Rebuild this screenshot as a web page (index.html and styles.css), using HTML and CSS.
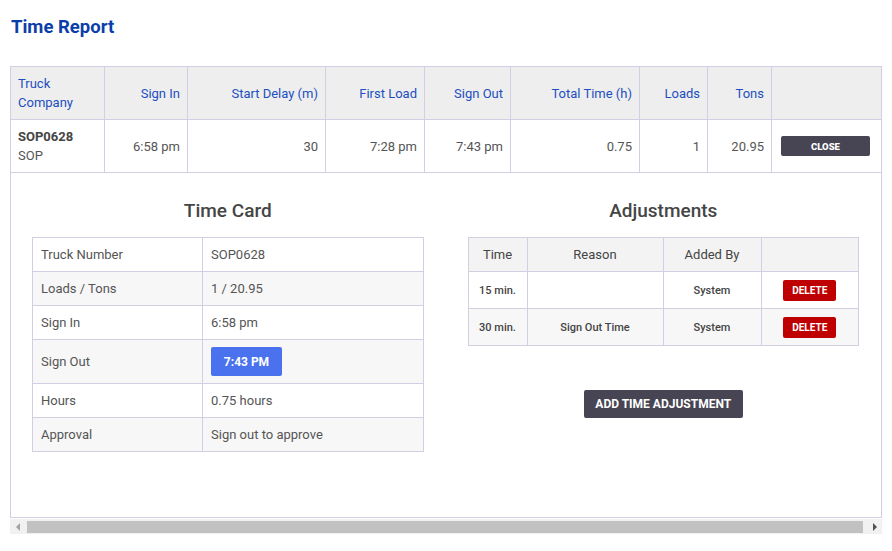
FILE: index.html
```html
<!DOCTYPE html>
<html lang="en">
<head>
  <meta charset="UTF-8">
  <title>Time Report</title>
  <link rel="stylesheet" href="styles.css">
</head>
<body>
  <div class="page">
    <h1 class="page-title">Time Report</h1>

    <div class="report-scroll">
      <table class="report-table">
        <thead>
          <tr>
            <th class="col-truck left">Truck<br>Company</th>
            <th class="col-signin">Sign In</th>
            <th class="col-delay">Start Delay (m)</th>
            <th class="col-first">First Load</th>
            <th class="col-signout">Sign Out</th>
            <th class="col-total">Total Time (h)</th>
            <th class="col-loads">Loads</th>
            <th class="col-tons">Tons</th>
            <th class="col-action"></th>
          </tr>
        </thead>
        <tbody>
          <tr class="truck-row">
            <td class="left">
              <div class="truck-number">SOP0628</div>
              <div>SOP</div>
            </td>
            <td>6:58 pm</td>
            <td>30</td>
            <td>7:28 pm</td>
            <td>7:43 pm</td>
            <td>0.75</td>
            <td>1</td>
            <td>20.95</td>
            <td class="left"><button class="btn btn-dark btn-close">CLOSE</button></td>
          </tr>
          <tr class="detail-row">
            <td colspan="9">
              <div class="detail">
                <div class="panel">
                  <h2 class="panel-title">Time Card</h2>
                  <table class="card-table">
                    <tr>
                      <td class="label">Truck Number</td>
                      <td>SOP0628</td>
                    </tr>
                    <tr>
                      <td class="label">Loads / Tons</td>
                      <td>1 / 20.95</td>
                    </tr>
                    <tr>
                      <td class="label">Sign In</td>
                      <td>6:58 pm</td>
                    </tr>
                    <tr class="tall">
                      <td class="label">Sign Out</td>
                      <td><button class="btn btn-blue">7:43 PM</button></td>
                    </tr>
                    <tr>
                      <td class="label">Hours</td>
                      <td>0.75 hours</td>
                    </tr>
                    <tr>
                      <td class="label">Approval</td>
                      <td>Sign out to approve</td>
                    </tr>
                  </table>
                </div>

                <div class="panel">
                  <h2 class="panel-title">Adjustments</h2>
                  <table class="adj-table">
                    <thead>
                      <tr>
                        <th class="adj-time">Time</th>
                        <th class="adj-reason">Reason</th>
                        <th class="adj-by">Added By</th>
                        <th></th>
                      </tr>
                    </thead>
                    <tbody>
                      <tr>
                        <td>15 min.</td>
                        <td></td>
                        <td>System</td>
                        <td><button class="btn btn-red">DELETE</button></td>
                      </tr>
                      <tr>
                        <td>30 min.</td>
                        <td>Sign Out Time</td>
                        <td>System</td>
                        <td><button class="btn btn-red">DELETE</button></td>
                      </tr>
                    </tbody>
                  </table>
                  <div class="adj-actions">
                    <button class="btn btn-dark btn-add">ADD TIME ADJUSTMENT</button>
                  </div>
                </div>
              </div>
            </td>
          </tr>
        </tbody>
      </table>
    </div>

    <!-- horizontal scrollbar of the report table -->
    <div class="hscroll">
      <span class="hscroll-arrow arrow-left"></span>
      <span class="hscroll-thumb"></span>
      <span class="hscroll-arrow arrow-right"></span>
    </div>
  </div>
</body>
</html>
```

FILE: styles.css
```css
* {
  box-sizing: border-box;
}
body {
  margin: 0;
  background-color: #ffffff;
  font-family: Roboto, "Liberation Sans", Arial, sans-serif;
  color: #555555;
}
.page {
  padding: 10px;
}
.page-title {
  margin: 0 0 22px 1px;
  font-size: 18.5px;
  line-height: 34px;
  font-weight: 700;
  color: #0c3eaa;
}

.report-scroll {
  overflow: hidden;
}
.report-table {
  width: 100%;
  border-collapse: collapse;
  table-layout: fixed;
  font-size: 13px;
}
.report-table > thead > tr > th,
.report-table > tbody > tr > td {
  border: 1px solid #d2cfe2;
}
.report-table > thead th {
  background-color: #eeeeee;
  color: #1d4fc0;
  font-weight: 400;
  line-height: 19px;
  padding: 7px;
  text-align: right;
}
.report-table .left {
  text-align: left;
}
.col-truck { width: 94px; }
.col-signin { width: 83px; }
.col-delay { width: 138px; }
.col-first { width: 99px; }
.col-signout { width: 86px; }
.col-total { width: 129px; }
.col-loads { width: 68px; }
.col-tons { width: 64px; }

.truck-row td {
  text-align: right;
  padding: 7px;
  line-height: 19px;
  color: #555555;
}
.truck-row td.left {
  text-align: left;
}
.truck-number {
  font-weight: 700;
  color: #444444;
}
.truck-row td:last-child {
  padding-left: 9px;
}

.btn {
  border: none;
  border-radius: 2px;
  color: #ffffff;
  font-family: Roboto, "Liberation Sans", Arial, sans-serif;
  font-weight: 700;
  cursor: pointer;
  padding: 0;
}
.btn-dark {
  background-color: #474554;
}
.btn-close {
  width: 89px;
  height: 20px;
  font-size: 9.5px;
  font-weight: 900;
  display: block;
}
.btn-blue {
  background-color: #4a72ee;
  width: 71px;
  height: 29px;
  font-size: 12px;
}
.btn-red {
  background-color: #bf0000;
  width: 53px;
  height: 21px;
  font-size: 10px;
}
.btn-add {
  width: 159px;
  height: 28px;
  font-size: 12px;
}

.detail-row > td {
  padding: 26px 22px 65px 21px;
}
.detail {
  display: grid;
  grid-template-columns: 1fr 1fr;
  column-gap: 44px;
}
.panel-title {
  margin: 0 0 14px;
  text-align: center;
  font-size: 19px;
  line-height: 24px;
  font-weight: 500;
  color: #454545;
}

.card-table,
.adj-table {
  width: 100%;
  border-collapse: collapse;
  table-layout: fixed;
  font-size: 13px;
}
.card-table td {
  border: 1px solid #d2cfe2;
  height: 34px;
  padding: 0 8px;
  color: #555555;
}
.card-table .label {
  width: 170px;
}
.card-table tr:nth-child(even) td {
  background-color: #f7f7f7;
}
.card-table tr.tall td {
  height: 44px;
}

.adj-table th,
.adj-table td {
  border: 1px solid #d2cfe2;
  text-align: center;
  padding: 0 4px;
}
.adj-table th {
  background-color: #f3f3f3;
  font-weight: 400;
  color: #444444;
  height: 34px;
}
.adj-table td {
  height: 37px;
  font-size: 11px;
  font-weight: 500;
  color: #444444;
}
.adj-table tbody tr:nth-child(even) td {
  background-color: #f7f7f7;
}
.adj-time { width: 59px; }
.adj-reason { width: 136px; }
.adj-by { width: 98px; }

.adj-actions {
  margin-top: 44px;
  text-align: center;
}

.hscroll {
  display: flex;
  align-items: center;
  height: 15px;
  margin-top: 1px;
  background-color: #f1f1f1;
}
.hscroll-arrow {
  width: 15px;
  height: 15px;
  display: flex;
  align-items: center;
  justify-content: center;
}
.hscroll-arrow::before {
  content: "";
  width: 0;
  height: 0;
  border-top: 4px solid transparent;
  border-bottom: 4px solid transparent;
}
.arrow-left::before {
  border-right: 4px solid #a3a3a3;
}
.arrow-right::before {
  border-left: 4px solid #505050;
}
.hscroll-thumb {
  flex: 1;
  height: 12px;
  margin: 0 4px 0 2px;
  background-color: #c1c1c1;
}
```
